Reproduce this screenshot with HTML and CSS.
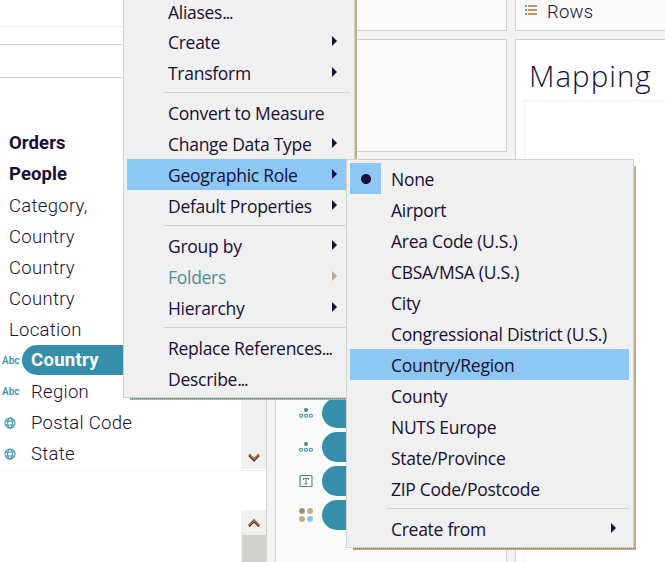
FILE: index.html
```html
<!DOCTYPE html>
<html lang="en">
<head>
<meta charset="utf-8">
<title>Mapping</title>
<link rel="stylesheet" href="styles.css">
</head>
<body>
<svg class="defs" aria-hidden="true">
  <symbol id="globe" viewBox="0 0 12 12"><g fill="none" stroke="#368faa" stroke-width="1.1"><circle cx="6" cy="6" r="5"/><ellipse cx="6" cy="6" rx="2.3" ry="5"/><path d="M1.5 4h9M1.5 8h9"/></g></symbol>
  <symbol id="detail" viewBox="0 0 14 10"><g fill="none" stroke="#368faa" stroke-width="1.1"><circle cx="2.1" cy="7.8" r="1.5"/><circle cx="7" cy="7.8" r="1.5"/><circle cx="11.9" cy="7.8" r="1.5"/></g><circle cx="7" cy="2" r="2" fill="#4f8583"/></symbol>
  <symbol id="down" viewBox="0 0 12 10"><path d="M1 3.4 6 8.4 11 3.4" fill="none" stroke="#170f35" stroke-width="2"/><path d="M1 2.2 6 7.2 11 2.2" fill="none" stroke="#a06c3a" stroke-width="2.2"/></symbol>
  <symbol id="up" viewBox="0 0 12 10"><path d="M1 8.4 6 3.4 11 8.4" fill="none" stroke="#170f35" stroke-width="2"/><path d="M1 7.2 6 2.2 11 7.2" fill="none" stroke="#a06c3a" stroke-width="2.2"/></symbol>
</svg>
<div class="app">
  <aside class="sidebar">
    <div class="toolbar"></div>
    <div class="strip"></div>
    <div class="search"></div>
    <div class="lists">
      <div class="dimensions">
        <ul class="fields">
          <li class="table">Orders</li>
          <li class="table">People</li>
          <li>Category,</li>
          <li>Country</li>
          <li>Country</li>
          <li>Country</li>
          <li>Location</li>
          <li class="field"><span class="abc">Abc</span><span class="pill">Country</span></li>
          <li class="field"><span class="abc">Abc</span><span class="label">Region</span></li>
          <li class="field"><svg class="globe"><use href="#globe"/></svg><span class="label">Postal Code</span></li>
          <li class="field"><svg class="globe"><use href="#globe"/></svg><span class="label">State</span></li>
        </ul>
        <div class="scrollbar"><svg class="chevron"><use href="#down"/></svg></div>
      </div>
      <div class="measures">
        <div class="scrollbar upper"><svg class="chevron"><use href="#up"/></svg><div class="thumb"></div></div>
      </div>
    </div>
  </aside>

  <section class="shelves">
    <div class="card pages"></div>
    <div class="card filters"></div>
    <div class="card marks">
      <div class="mark"><svg class="detail"><use href="#detail"/></svg><span class="mark-pill"></span></div>
      <div class="mark"><svg class="detail"><use href="#detail"/></svg><span class="mark-pill"></span></div>
      <div class="mark"><svg class="mark-icon" viewBox="0 0 14 14"><rect x="1" y="1.5" width="12" height="11" rx="1" fill="#fff" stroke="#368faa" stroke-width="1.2"/><path d="M4.5 6V4.5h5V6M7 4.5v5.5M5.5 10h3" fill="none" stroke="#8f7656" stroke-width="1.1"/></svg><span class="mark-pill"></span></div>
      <div class="mark"><svg class="mark-icon" viewBox="0 0 14 14"><circle cx="3" cy="3" r="3" fill="#a39b80"/><circle cx="11" cy="3" r="3" fill="#c4ab8a"/><circle cx="3" cy="11" r="3" fill="#c4ab8a"/><circle cx="11" cy="11" r="3" fill="#8dc8f5"/><path d="M1.5 2h1M4 2h1M2.5 4h1M10.5 11h1" stroke="#368faa"/></svg><span class="mark-pill"></span></div>
    </div>
  </section>

  <main class="sheet-area">
    <div class="card rows"><svg class="rows-icon" viewBox="0 0 12 10"><path d="M0 1h2M0 5h2M0 9h2" stroke="#368faa" stroke-width="1.6"/><path d="M3 1h9M3 5h9M3 9h9" stroke="#ae7136" stroke-width="1.6"/></svg><span>Rows</span></div>
    <div class="card sheet">
      <h1>Mapping</h1>
      <div class="canvas"></div>
    </div>
  </main>
</div>

<nav class="menu context">
  <div class="item">Aliases<span class="dots">...</span></div>
  <div class="item sub">Create</div>
  <div class="item sub">Transform</div>
  <hr>
  <div class="item">Convert to Measure</div>
  <div class="item sub">Change Data Type</div>
  <div class="item sub active">Geographic Role</div>
  <div class="item sub">Default Properties</div>
  <hr>
  <div class="item sub">Group by</div>
  <div class="item sub disabled">Folders</div>
  <div class="item sub">Hierarchy</div>
  <hr>
  <div class="item">Replace References<span class="dots">...</span></div>
  <div class="item">Describe<span class="dots">...</span></div>
</nav>

<nav class="menu roles">
  <div class="item checked">None</div>
  <div class="item">Airport</div>
  <div class="item">Area Code (U.S.)</div>
  <div class="item">CBSA/MSA (U.S.)</div>
  <div class="item">City</div>
  <div class="item">Congressional District (U.S.)</div>
  <div class="item active">Country/Region</div>
  <div class="item">County</div>
  <div class="item">NUTS Europe</div>
  <div class="item">State/Province</div>
  <div class="item">ZIP Code/Postcode</div>
  <hr>
  <div class="item sub">Create from</div>
</nav>
</body>
</html>
```
FILE: styles.css
```css
* { box-sizing: border-box; }
body {
  margin: 0;
  width: 665px;
  height: 562px;
  overflow: hidden;
  position: relative;
  background: #f3f3f3;
  color: #170f35;
  font-family: "Open Sans", "Noto Sans", sans-serif;
  font-size: 17.5px;
}
.defs { position: absolute; width: 0; height: 0; }
.app { display: flex; height: 562px; }

/* data pane */
.sidebar {
  width: 267px;
  display: flex;
  flex-direction: column;
  background: #fff;
  border-right: 1px solid #d2d2cc;
  font-family: Roboto, "Open Sans", sans-serif;
  font-size: 18.5px;
}
.toolbar { height: 27px; border-bottom: 1px solid #f0f0f0; }
.strip { height: 18px; border-bottom: 1px solid #d2d2cc; }
.search { height: 33px; border-bottom: 1px solid #d2d2cc; }
.lists { flex: 1; display: flex; flex-direction: column; }
.dimensions { height: 393px; display: flex; justify-content: space-between; border-bottom: 1px solid #f0f0f0; }
.fields { list-style: none; margin: 0; padding: 50px 0 0; width: 241px; }
.fields li { height: 31px; line-height: 32px; padding-left: 9px; white-space: nowrap; font-weight: 300; letter-spacing: 0.3px; }
.fields .table { font-weight: 700; line-height: 31px; letter-spacing: 0.1px; }
.fields .field { display: flex; align-items: center; padding-left: 2px; }
.abc { width: 20px; font-size: 10px; color: #368faa; font-weight: 500; letter-spacing: 0; line-height: 31px; }
.globe { width: 12px; height: 12px; margin: 0 15px 0 2px; }
.abc + .label { padding-left: 9px; }
.pill {
  flex: 1;
  height: 30px;
  margin-top: -2px;
  line-height: 30px;
  padding-left: 9px;
  border-radius: 15px 0 0 15px;
  background: #368faa;
  color: #fff;
  font-weight: 700;
}
.scrollbar { width: 25px; height: 391px; background: #f0f0f0; display: flex; flex-direction: column; align-items: center; justify-content: flex-end; padding-bottom: 7px; }
.chevron { width: 12px; height: 10px; }
.measures { flex: 1; display: flex; justify-content: flex-end; padding-top: 39px; }
.upper { height: auto; justify-content: flex-start; padding: 8px 0 0; }
.thumb { width: 24px; flex: 1; margin-top: 7px; background: #d2d2cc; }

/* shelves and worksheet */
.card { background: #fafafa; border: 1px solid #d2d2cc; }
.shelves { width: 232px; margin-left: 8px; display: flex; flex-direction: column; gap: 8px; }
.pages { height: 31px; border-top: 0; }
.filters { height: 113px; }
.marks { flex: 1; border-bottom: 0; padding: 237px 0 0 23px; display: flex; flex-direction: column; gap: 4px; }
.mark { height: 30px; display: flex; align-items: center; }
.detail { width: 14px; height: 10px; }
.mark-icon { width: 14px; height: 14px; }
.mark-pill { width: 60px; height: 30px; margin-left: 9px; border-radius: 15px; background: #368faa; }
.sheet-area { flex: 1; margin-left: 8px; display: flex; flex-direction: column; gap: 8px; }
.rows { height: 31px; border-width: 0 0 1px 1px; display: flex; align-items: center; gap: 10px; padding: 0 0 8px 9px; font: 300 18.5px Roboto, sans-serif; letter-spacing: 0.2px; }
.rows span { padding-top: 2px; }
.rows-icon { width: 12px; height: 10px; margin-top: -2px; }
.sheet { flex: 1; background: #fff; border-width: 1px 0 0 1px; padding: 16px 0 0 8px; display: flex; flex-direction: column; }
.sheet h1 { margin: 0; padding-left: 5px; height: 44px; font-size: 29.5px; line-height: 39px; font-weight: 300; letter-spacing: 1px; }
.canvas { flex: 1; border: solid #f0f0f0; border-width: 1px 0 0 1px; }

/* popup menus */
.menu { position: absolute; background: #f0f0f0; border: 1px solid #d2d2cc; padding: 3px 4px 3px 3px; letter-spacing: -0.28px; }
.menu::before, .menu::after { content: ""; position: absolute; background: #c4ab8a; }
.menu::before { top: 6px; bottom: -3px; right: -3px; width: 2px; }
.menu::after {
  left: 6px;
  right: -3px;
  bottom: -3px;
  height: 2px;
  background: repeating-linear-gradient(90deg, #368faa 0 1px, #c4ab8a 1px 2px) top / 100% 1px no-repeat #c4ab8a;
}
.context { left: 123px; top: 0; width: 232px; height: 398px; border-top: 0; padding-top: 0; }
.context::before { top: 0; }
.context .item:first-child { height: 26px; line-height: 25px; }
.roles { left: 346px; top: 159px; width: 288px; height: 389px; }
.item { position: relative; height: 31px; line-height: 33px; padding-left: 41px; white-space: nowrap; }
.dots { letter-spacing: -1.2px; }
.active { background: #8dc8f5; }
.disabled { color: #4f8f98; }
.sub::after {
  content: "";
  position: absolute;
  right: 13px;
  top: 10px;
  border: solid transparent;
  border-width: 5px 0 5px 5px;
  border-left-color: #170f35;
}
.disabled.sub::after { border-left-color: #bfa98a; }
.checked::before {
  content: "";
  position: absolute;
  left: 0;
  top: 0;
  width: 31px;
  height: 31px;
  background: radial-gradient(circle at 16px 16px, #170f35 4.6px, #8dc8f5 5.4px);
}
.menu hr { margin: 4px 0 4px 37px; border: 0; height: 1px; background: #d2d2cc; }
```
